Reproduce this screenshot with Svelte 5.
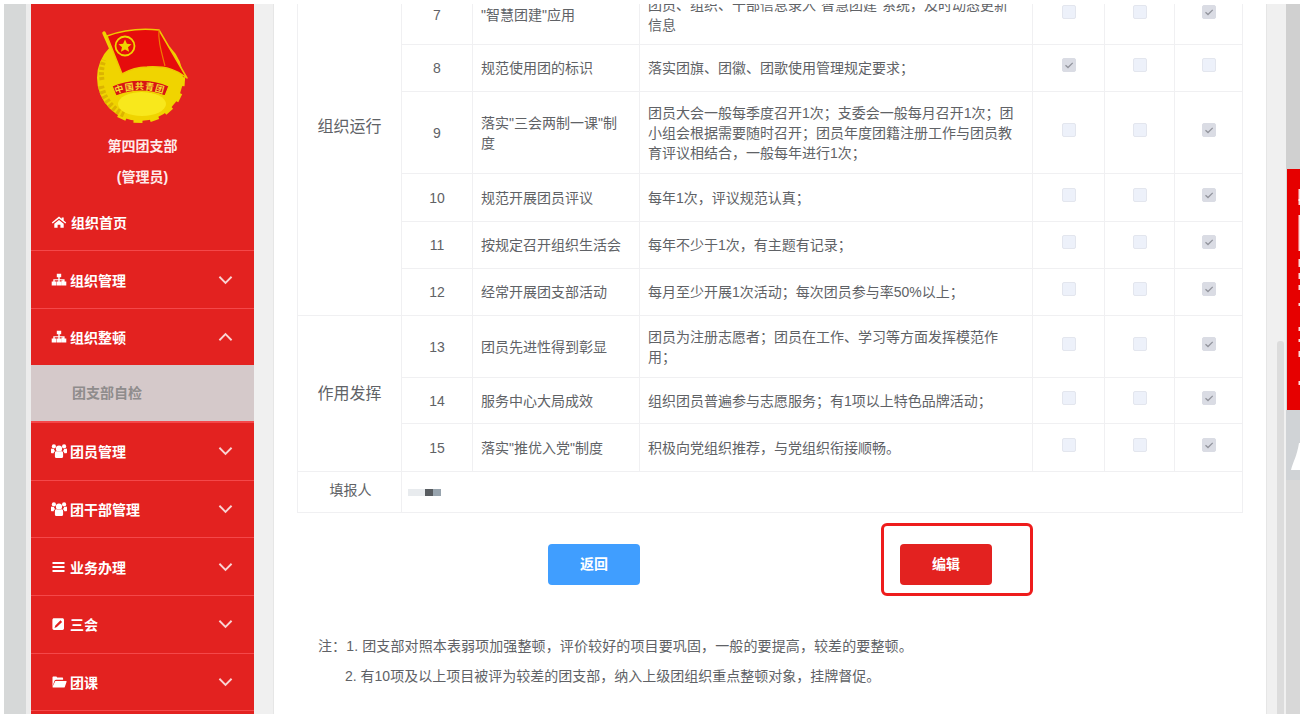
<script>
  const menu = [
    { icon: 'sitemap', label: '组织管理' },
    { icon: 'sitemap', label: '组织整顿', open: true, sub: ['团支部自检'] },
    { icon: 'users', label: '团员管理' },
    { icon: 'users', label: '团干部管理' },
    { icon: 'bars', label: '业务办理' },
    { icon: 'edit', label: '三会' },
    { icon: 'folder', label: '团课' }
  ];

  // checks: index of the ticked column
  const groups = [
    {
      name: '组织运行',
      offset: true,
      rows: [
        { no: 7, h: 60, title: '"智慧团建"应用', desc: '团员、组织、干部信息录入"智慧团建"系统，及时动态更新信息', check: 2 },
        { no: 8, h: 47, title: '规范使用团的标识', desc: '落实团旗、团徽、团歌使用管理规定要求；', check: 0 },
        { no: 9, h: 82, title: '落实"三会两制一课"制度', desc: '团员大会一般每季度召开1次；支委会一般每月召开1次；团小组会根据需要随时召开；团员年度团籍注册工作与团员教育评议相结合，一般每年进行1次；', check: 2 },
        { no: 10, h: 48, title: '规范开展团员评议', desc: '每年1次，评议规范认真；', check: 2 },
        { no: 11, h: 47, title: '按规定召开组织生活会', desc: '每年不少于1次，有主题有记录；', check: 2 },
        { no: 12, h: 47, title: '经常开展团支部活动', desc: '每月至少开展1次活动；每次团员参与率50%以上；', check: 2 }
      ]
    },
    {
      name: '作用发挥',
      rows: [
        { no: 13, h: 62, title: '团员先进性得到彰显', desc: '团员为注册志愿者；团员在工作、学习等方面发挥模范作用；', check: 2 },
        { no: 14, h: 46, title: '服务中心大局成效', desc: '组织团员普遍参与志愿服务；有1项以上特色品牌活动；', check: 2 },
        { no: 15, h: 48, title: '落实"推优入党"制度', desc: '积极向党组织推荐，与党组织衔接顺畅。', check: 2 }
      ]
    }
  ];

  const teeth = [4, 26, 48, 70, 92, 114];
  const marks = [[20, 12], [30, 6], [46, 36], [90, 8], [104, 6], [116, 5], [134, 3], [158, 4], [170, 3], [182, 6], [212, 4]];
</script>

{#snippet icon(name)}
  <svg class="ico" viewBox="0 0 16 16" aria-hidden="true">
    {#if name === 'home'}
      <path d="M8 2.600 .8 8.600l.9 1L8 4.400l6.300 5.200.9-1L12.700 6.500V3.400h-2v1.400z" />
      <path d="M3.300 9.800 8 6l4.700 3.800v4H9.400v-3H6.600v3H3.300z" />
    {:else if name === 'sitemap'}
      <path d="M5.800 1.800h4.400v3.500H8.700v1.900h4.900v2.400h1.700v3.900h-4.800V8.600h1.700V8.200H8.700v1.400h1.700v3.900H5.600V9.600h1.700V8.200H3.700v1.400h1.500v3.900H.7V9.600h1.600V7.200h5V5.300H5.800z" />
    {:else if name === 'users'}
      <circle cx="8" cy="5.700" r="3.100" />
      <circle cx="2.900" cy="3.400" r="2.100" />
      <circle cx="13.100" cy="3.400" r="2.100" />
      <path d="M3.900 10c0-1.200 1-1.900 2-1.700.6.500 1.300.7 2.100.7s1.500-.2 2.100-.7c1-.2 2 .5 2 1.700v3.500c0 .9-.6 1.500-1.400 1.500H5.300c-.8 0-1.400-.6-1.400-1.500z" />
      <path d="M0 6.500c0-.6.500-1.100 1.100-1.100.5.400 1.100.700 1.800.700.200 1 .7 1.700 1.400 2.200-1.100.3-1.500 1-1.600 2H1c-.6 0-1-.4-1-1zM16 6.500c0-.6-.5-1.100-1.100-1.100-.5.400-1.100.700-1.800.700-.2 1-.7 1.700-1.400 2.200 1.100.3 1.500 1 1.600 2H15c.6 0 1-.4 1-1z" />
    {:else if name === 'bars'}
      <path d="M1.500 3h12v2h-12zM1.500 7h12v2h-12zM1.500 11h12v2h-12z" />
    {:else if name === 'edit'}
      <path fill-rule="evenodd" d="M3 2.300h8.400c.9 0 1.600.7 1.600 1.600v8.400c0 .9-.7 1.600-1.600 1.600H3c-.9 0-1.600-.7-1.600-1.600V3.900c0-.9.7-1.600 1.600-1.600zM9.500 4.300 4.300 9.500l-.8 2.400 2.400-.8 5.200-5.200z" />
    {:else}
      <path d="M1.500 12.500V3.600c0-.6.400-1 1-1h2.600c.5 0 .9.400 1 .9h5c.6 0 1 .4 1 1v1.200H5.200c-.8 0-1.400.4-1.700 1.100z" />
      <path d="M4.300 7.100h10.800c.4 0 .6.300.5.700l-1.800 5.100c-.1.400-.5.600-.9.600H2c-.4 0-.6-.3-.5-.7z" />
    {/if}
  </svg>
{/snippet}

{#snippet box(checked)}
  <span class="box" class:checked>
    {#if checked}
      <svg viewBox="0 0 14 14" aria-hidden="true"><path d="M3.500 7.200 6 9.500l4.700-4.600" /></svg>
    {/if}
  </span>
{/snippet}

<div class="frame">
  <div class="gutter"></div>
  <div class="gutter-light"></div>

  <aside class="sidebar">
    <div class="brand">
      <svg class="badge" viewBox="-3 0 111 110" aria-label="团徽">
        {#each teeth as a}
          <rect x="88" y="54" width="7" height="9" fill="#f0d400" transform="rotate({a} 50 58)" />
        {/each}
        <circle cx="50" cy="58" r="43" fill="#f0d400" />
        <path d="M11 66a40 40 0 0 0 24 29" fill="none" stroke="#dcb400" stroke-width="6" stroke-dasharray="3 2" />
        <path d="M12 60a38 38 0 0 1 2-20" fill="none" stroke="#dcb400" stroke-width="5" stroke-dasharray="3 2" />
        <ellipse cx="52" cy="84" rx="24" ry="12" fill="#f8e81c" />
        <path d="M14 13 33 56" stroke="#f0d400" stroke-width="3.500" stroke-linecap="round" />
        <path d="M17 16C33 10 50 8 69 10L97 58C86 50 78 46 57 47 47 47 39 50 32 54Z" fill="#e60c0c" stroke="#f0c800" stroke-width="1.500" stroke-linejoin="round" />
        <path d="M69 10C68 18 70 27 75 46" fill="none" stroke="#f07a00" stroke-width="1.200" />
        <circle cx="35" cy="26" r="9.500" fill="#e60c0c" stroke="#f0d400" stroke-width="1.800" />
        <path d="m35 19.500 1.900 4.300 4.600.4-3.500 3 1.100 4.600-4.100-2.400-4.100 2.400 1.100-4.600-3.500-3 4.600-.4z" fill="#f0d400" />
        <path d="M22 66c17-8 40-8 57 0l-4 10c-15-6-33-6-49 0z" fill="#d81414" stroke="#f0d400" stroke-width="1.300" />
        <path id="ribbon" d="M26 74c14-6 34-6 49 0" fill="none" />
        <text class="ribbon-text" fill="#f5dc30"><textPath href="#ribbon" textLength="48">中国共青团</textPath></text>
      </svg>
      <div class="org">第四团支部</div>
      <div class="org">(管理员)</div>
    </div>

    <nav>
      <div class="item home">
        <span class="item-label">{@render icon('home')}<span class="home-text">组织首页</span></span>
      </div>
      {#each menu as m}
        <div class="item" class:open={m.open}>
          <span class="item-label">{@render icon(m.icon)}<span>{m.label}</span></span>
          <svg class="chev" viewBox="0 0 16 10" aria-hidden="true">
            <path d={m.open ? 'M1.500 8.500 8 2l6.500 6.500' : 'M1.500 1.500 8 8l6.500-6.500'} />
          </svg>
        </div>
        {#if m.sub}
          {#each m.sub as s}
            <div class="sub">{s}</div>
          {/each}
        {/if}
      {/each}
    </nav>
  </aside>

  <div class="gutter-light wide"></div>

  <main class="content">
    <table>
      <colgroup>
        <col class="c-group" /><col class="c-no" /><col class="c-title" /><col class="c-desc" /><col class="c-a" /><col class="c-b" /><col class="c-c" />
      </colgroup>
      <tbody>
        {#each groups as g}
          {#each g.rows as r, i}
            <tr style="height: {r.h}px">
              {#if i === 0}
                <td class="group" class:offset={g.offset} rowspan={g.rows.length}>{g.name}</td>
              {/if}
              <td class="no">{r.no}</td>
              <td>{r.title}</td>
              <td class="desc">{r.desc}</td>
              {#each [0, 1, 2] as c}
                <td class="chk">{@render box(r.check === c)}</td>
              {/each}
            </tr>
          {/each}
        {/each}
        <tr class="signer">
          <td class="signer-label">填报人</td>
          <td class="signer-value" colspan="6">
            <div class="mosaic"><i class="m1"></i><i class="m2"></i><i class="m3"></i></div>
          </td>
        </tr>
      </tbody>
    </table>

    <div class="actions">
      <button class="btn back">返回</button>
      <div class="highlight">
        <button class="btn edit">编辑</button>
      </div>
    </div>

    <div class="notes">
      <p class="first">注：1. 团支部对照本表弱项加强整顿，评价较好的项目要巩固，一般的要提高，较差的要整顿。</p>
      <p class="indent">2. 有10项及以上项目被评为较差的团支部，纳入上级团组织重点整顿对象，挂牌督促。</p>
    </div>
  </main>

  <div class="rail"><div class="thumb"></div></div>

  <div class="peek">
    <div class="peek-top"></div>
    <div class="peek-red">
      <svg viewBox="0 0 13 241" aria-hidden="true">
        {#each marks as [y, h]}
          <rect x="11.500" {y} width="1.500" height={h} fill="#fff" opacity="0.85" />
        {/each}
      </svg>
    </div>
    <div class="peek-shape">
      <svg viewBox="0 0 14 70" aria-hidden="true">
        <path d="M5 60C7 52 11 46 13 33H14V60Z" fill="#fff" />
      </svg>
    </div>
    <div class="peek-rest"></div>
  </div>
</div>

<style>
  :global(body) {
    margin: 0;
    background: #fff;
  }

  .frame {
    display: flex;
    width: 1304px;
    height: 718px;
    padding: 4px 4px 4px 4px;
    box-sizing: border-box;
    overflow: hidden;
    font-family: "Liberation Sans", "Noto Sans CJK SC", sans-serif;
    font-size: 14px;
    color: #606266;
  }

  .gutter {
    flex: 0 0 22px;
    background: #d6d8d8;
  }

  .gutter-light {
    flex: 0 0 5px;
    background: #ececec;
  }

  .gutter-light.wide {
    flex-basis: 20px;
    background: #f0f0f0;
    border-right: 1px solid #e6e6e6;
    box-sizing: border-box;
  }

  .sidebar {
    flex: 0 0 223px;
    background: #e32220;
    color: #fff;
    font-weight: 700;
    overflow: hidden;
  }

  .brand {
    padding-top: 16px;
    text-align: center;
  }

  .badge {
    display: block;
    width: 111px;
    height: 110px;
    margin: 0 0 1px 56px;
  }

  .ribbon-text {
    font-size: 9px;
    font-weight: 700;
  }

  .org {
    line-height: 31px;
    color: #fdeaea;
  }

  .item {
    display: flex;
    align-items: center;
    justify-content: space-between;
    height: 58px;
    box-sizing: border-box;
    padding: 0 21px 0 20px;
    border-bottom: 1px solid #f4484a;
  }

  .item.open {
    height: 56px;
    border-bottom: none;
  }

  .sub ~ .item {
    height: 57.7px;
  }

  .item-label {
    display: flex;
    align-items: center;
    gap: 3px;
  }

  .home-text {
    margin-left: 1px;
  }

  .ico {
    width: 16px;
    height: 16px;
    fill: #fff;
  }

  .chev {
    width: 15px;
    height: 10px;
    fill: none;
    stroke: #f9d4d3;
    stroke-width: 2;
  }

  .sub {
    height: 58px;
    box-sizing: border-box;
    padding-left: 41px;
    line-height: 56px;
    background: #d5c9ca;
    color: #8f8c8c;
    border-bottom: 2px solid #f4484a;
  }

  .content {
    flex: 0 0 992px;
    padding-left: 23px;
    box-sizing: border-box;
    overflow: hidden;
  }

  table {
    width: 945px;
    margin-top: -20px;
    border-collapse: collapse;
    table-layout: fixed;
    border: 1px solid #e4e4e6;
    line-height: 20px;
  }

  .c-group { width: 104px; }
  .c-no { width: 71px; }
  .c-title { width: 167px; }
  .c-desc { width: 393px; }
  .c-a { width: 72px; }
  .c-b { width: 70px; }
  .c-c { width: 68px; }

  td {
    padding: 0 9px 0 8px;
    border: 1px solid #f0f0f2;
    box-sizing: border-box;
    vertical-align: middle;
  }

  td.desc {
    padding-right: 14px;
  }

  .group {
    padding: 0;
    text-align: center;
    font-size: 16px;
  }

  .group.offset {
    padding-bottom: 46px;
  }

  .no,
  .chk {
    padding: 0;
    text-align: center;
  }

  .box {
    display: inline-block;
    width: 14px;
    height: 14px;
    box-sizing: border-box;
    margin-top: -8px;
    vertical-align: middle;
    background: #edf1fa;
    border: 1px solid #e3e6ee;
    border-radius: 2px;
  }

  .box.checked {
    background: #dadce4;
    border-color: #dadce4;
  }

  .box svg {
    display: block;
    width: 14px;
    height: 14px;
    margin: -1px;
    fill: none;
    stroke: #92949c;
    stroke-width: 1.300;
  }

  .signer {
    height: 41px;
  }

  td.signer-label {
    padding: 0 0 5px 2px;
    text-align: center;
  }

  td.signer-value {
    padding-left: 6px;
  }

  .mosaic {
    display: flex;
    height: 7px;
  }

  .mosaic i {
    display: block;
  }

  .m1 { width: 17px; background: #e8ebee; }
  .m2 { width: 8px; background: #585c60; }
  .m3 { width: 8px; background: #98a4ae; }

  .actions {
    display: flex;
    align-items: flex-start;
    padding: 31px 0 0 251px;
    height: 41px;
  }

  .btn {
    width: 92px;
    height: 41px;
    padding: 0 0 3px;
    border: none;
    border-radius: 4px;
    color: #fff;
    font: inherit;
    font-weight: 700;
  }

  .back {
    background: #409eff;
  }

  .edit {
    background: #e32220;
  }

  .highlight {
    position: relative;
    margin-left: 260px;
  }

  .highlight::after {
    content: "";
    position: absolute;
    left: -19px;
    top: -21px;
    width: 152px;
    height: 73px;
    box-sizing: border-box;
    border: 3px solid #ee1c1c;
    border-radius: 6px;
  }

  .notes {
    margin: 46px 0 0 21px;
    line-height: 30px;
  }

  .notes p {
    margin: 0;
  }

  .notes .first {
    letter-spacing: 0.12px;
  }

  .notes .indent {
    padding-left: 27px;
  }

  .rail {
    flex: 0 0 20px;
    padding: 337px 2px 0 11px;
    box-sizing: border-box;
    background: #f0f0f0;
    border-left: 1px solid #e6e6e6;
  }

  .thumb {
    height: 100%;
    background: #dcdcdc;
    border-radius: 3px 3px 0 0;
    margin-left: -1px;
  }

  .peek {
    flex: 0 0 14px;
    display: flex;
    flex-direction: column;
    background: #d8d8d8;
  }

  .peek-top {
    height: 165px;
    background: #d0d0d0;
  }

  .peek-red {
    height: 241px;
    margin-left: 1px;
    background: #e60000;
  }

  .peek-red svg {
    display: block;
    width: 13px;
    height: 241px;
  }

  .peek-shape {
    height: 70px;
    background: #d0d3d6;
  }

  .peek-shape svg {
    display: block;
    width: 14px;
    height: 70px;
  }

  .peek-rest {
    flex: 1;
  }
</style>
